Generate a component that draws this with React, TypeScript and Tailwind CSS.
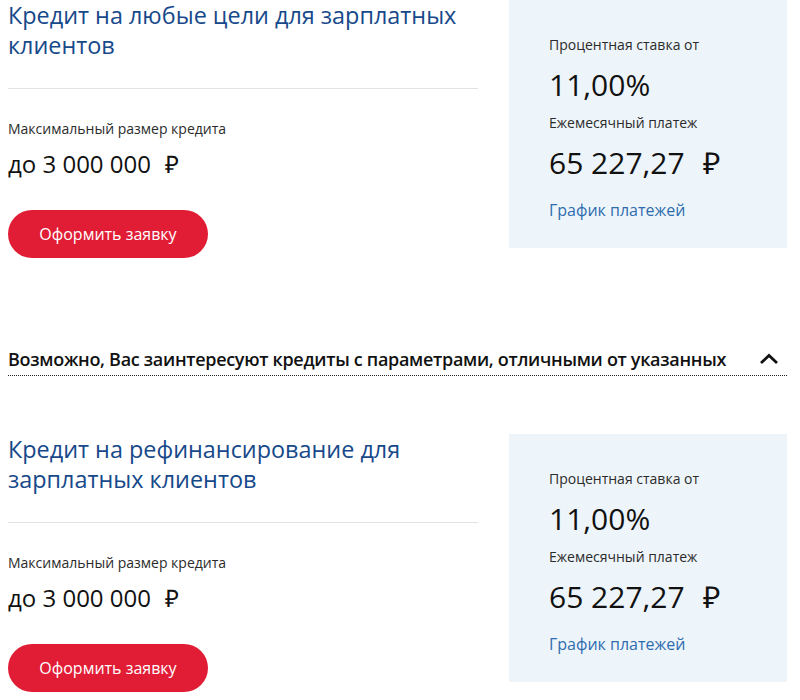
import React from 'react';

type Loan = {
  title: string[];
  maxAmount: string;
  rate: string;
  payment: string;
};

const loans: Loan[] = [
  {
    title: ['Кредит на любые цели для зарплатных', 'клиентов'],
    maxAmount: 'до 3 000 000',
    rate: '11,00%',
    payment: '65 227,27',
  },
  {
    title: ['Кредит на рефинансирование для', 'зарплатных клиентов'],
    maxAmount: 'до 3 000 000',
    rate: '11,00%',
    payment: '65 227,27',
  },
];

function LoanCard({ loan }: { loan: Loan }) {
  return (
    <div className="flex items-start">
      {/* Left column */}
      <div className="w-[470px] shrink-0">
        <h2 className="text-[23.4px] leading-[30px] font-normal text-[#17498a]">
          {loan.title.map((line, i) => (
            <span key={i} className="block">{line}</span>
          ))}
        </h2>
        <div className="mt-[28px] h-px bg-[#e3e3e3]"></div>

        <p className="mt-[30px] text-[14px] leading-[20px] text-[#2b2b2b]">Максимальный размер кредита</p>
        <p className="mt-[9px] text-[24px] leading-[32px] text-[#111]">
          {loan.maxAmount}
          <span className="ml-[14px] font-light">₽</span>
        </p>

        <button className="mt-[30px] w-[200px] h-[48px] rounded-full bg-[#e11d36] text-white text-[16px] font-normal">
          Оформить заявку
        </button>
      </div>

      {/* Rate panel */}
      <div className="ml-[31px] w-[278px] h-[248px] shrink-0 bg-[#eef5fa] pl-[40px] pt-[35px]">
        <p className="text-[14px] leading-[20px] text-[#2b2b2b]">Процентная ставка от</p>
        <p className="mt-[12px] text-[30px] leading-[36px] text-[#111]">{loan.rate}</p>
        <p className="mt-[10px] text-[14px] leading-[20px] text-[#2b2b2b]">Ежемесячный платеж</p>
        <p className="mt-[12px] text-[30px] leading-[36px] text-[#111]">
          {loan.payment}
          <span className="ml-[18px] font-light">₽</span>
        </p>
        <a href="#" className="block mt-[17px] text-[16px] leading-[24px] text-[#2e6cb0]">
          График платежей
        </a>
      </div>
    </div>
  );
}

export default function App() {
  return (
    <div className="w-[800px] h-[700px] overflow-hidden bg-white font-['Open_Sans',sans-serif]">
      <div className="pl-[8px] pr-[13px]">
        <LoanCard loan={loans[0]} />

        {/* Accordion header */}
        <div className="mt-[89px] flex items-center justify-between border-b border-dotted border-[#222] pb-[4px]">
          <span className="text-[18px] leading-[24px] font-semibold tracking-[-0.3px] text-[#111]">
            Возможно, Вас заинтересуют кредиты с параметрами, отличными от указанных
          </span>
          <svg width="20" height="12" viewBox="0 0 20 12" className="mr-[8px]">
            <path d="M2 10 L10 2.5 L18 10" fill="none" stroke="#111" strokeWidth="2.8" />
          </svg>
        </div>

        <div className="mt-[58px]">
          <LoanCard loan={loans[1]} />
        </div>
      </div>
    </div>
  );
}
